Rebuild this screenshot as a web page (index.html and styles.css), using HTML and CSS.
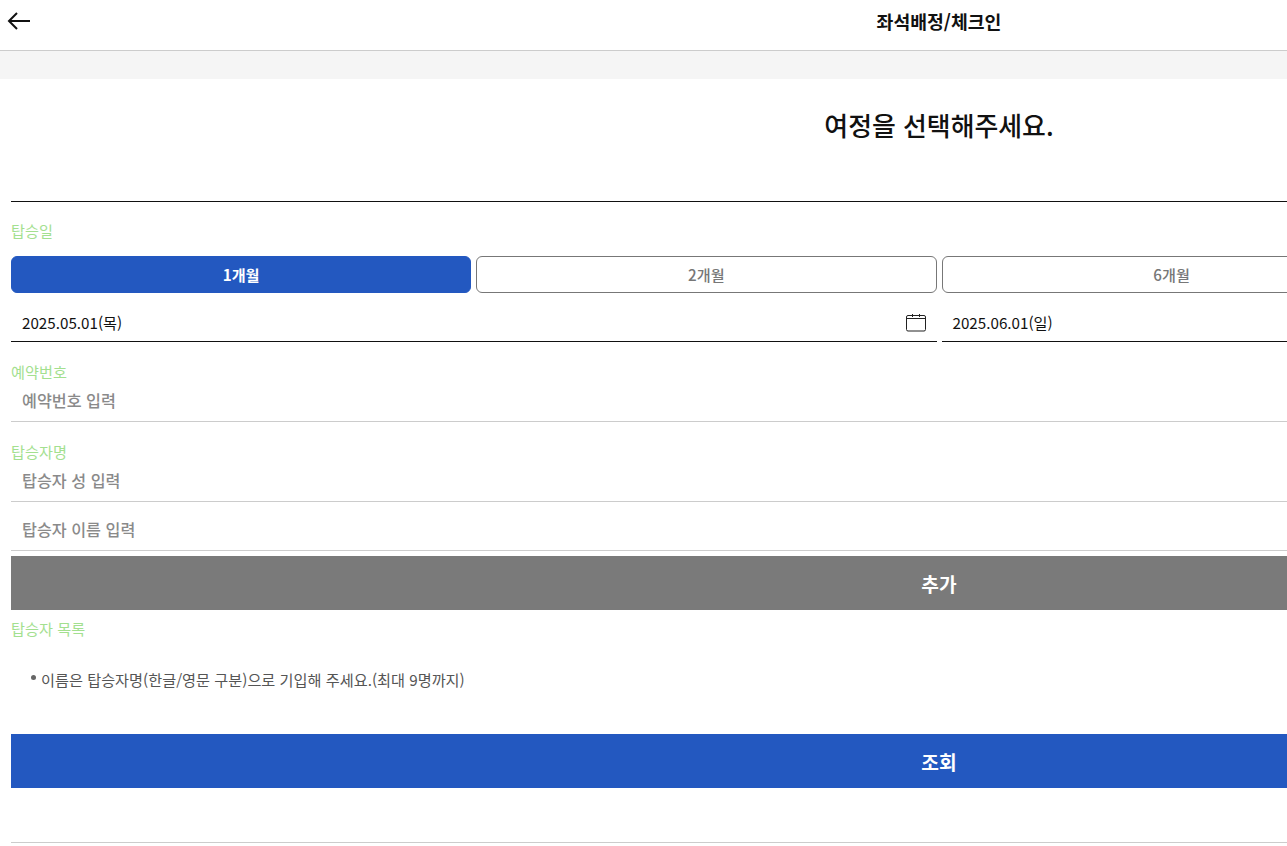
FILE: index.html
```html
<!DOCTYPE html>
<html lang="ko">
<head>
<meta charset="utf-8">
<title>좌석배정/체크인</title>
<link rel="stylesheet" href="styles.css">
</head>
<body>
<div class="page">
  <header class="topbar">
    <svg class="back" width="24" height="20" viewBox="0 0 24 20" fill="none" stroke="#111" stroke-width="2"><path d="M23 10H2M10 2l-8 8 8 8"/></svg>
    <h1 class="topbar-title">좌석배정/체크인</h1>
  </header>
  <div class="band"></div>
  <main class="content">
    <h2 class="heading">여정을 선택해주세요.</h2>
    <div class="section-date">
      <div class="label">탑승일</div>
      <div class="tabs">
        <button class="tab tab-on">1개월</button>
        <button class="tab">2개월</button>
        <button class="tab">6개월</button>
        <button class="tab" aria-hidden="true"></button>
      </div>
      <div class="dates">
        <div class="date"><span>2025.05.01(목)</span>
          <svg width="22" height="18" viewBox="0 0 22 18" fill="none" stroke="#222" stroke-width="1"><rect x="1.5" y="1.5" width="19" height="15.5" rx="1.5"/><path d="M1.5 4.5h19M7.5 0v3M14.5 0v3"/></svg>
        </div>
        <div class="date"><span>2025.06.01(일)</span>
          <svg width="22" height="18" viewBox="0 0 22 18" fill="none" stroke="#222" stroke-width="1"><rect x="1.5" y="1.5" width="19" height="15.5" rx="1.5"/><path d="M1.5 4.5h19M7.5 0v3M14.5 0v3"/></svg>
        </div>
      </div>
    </div>
    <div class="label label-res">예약번호</div>
    <div class="field">예약번호 입력</div>
    <div class="label label-name">탑승자명</div>
    <div class="field">탑승자 성 입력</div>
    <div class="field field-second">탑승자 이름 입력</div>
    <button class="wide wide-gray">추가</button>
    <div class="label label-list">탑승자 목록</div>
    <p class="note"><span class="dot"></span>이름은 탑승자명(한글/영문 구분)으로 기입해 주세요.(최대 9명까지)</p>
    <button class="wide wide-blue">조회</button>
    <div class="endline"></div>
  </main>
</div>
</body>
</html>
```
FILE: styles.css
```css
html, body { margin: 0; padding: 0; overflow: hidden; height: 846px; background: #fff; }
body { font-family: "Noto Sans CJK KR", "Noto Sans", sans-serif; color: #111; }
.page { width: 1878px; }
.topbar { position: relative; height: 50px; border-bottom: 1px solid #ccc; box-sizing: content-box; display: flex; justify-content: center; }
.back { position: absolute; left: 7px; top: 11px; }
.topbar-title { margin: 0; font-size: 18.3px; font-weight: 700; line-height: 42px; color: #111; }
.band { height: 28px; background: #f5f5f5; }
.content { padding: 0 11px; }
.heading { margin: 0; height: 123px; box-sizing: border-box; border-bottom: 1px solid #111; padding-top: 26px; font-size: 25.9px; font-weight: 500; line-height: 40px; text-align: center; color: #111; }
.label { font-size: 15.2px; line-height: 20px; padding-bottom: 2px; color: #a3e08f; }
.section-date .label { margin-top: 18px; }
.tabs { display: flex; gap: 5px; margin-top: 14px; }
.tab { flex: 1; height: 37px; box-sizing: border-box; border: 1px solid #777; border-radius: 6px; background: #fff; color: #777; font: 500 15.2px "Noto Sans CJK KR", sans-serif; padding: 0 0 2px; }
.tab-on { background: #2358c0; border-color: #2358c0; color: #fff; font-weight: 700; }
.dates { display: flex; gap: 5px; margin-top: 10px; }
.date { flex: 1; height: 39px; box-sizing: border-box; border-bottom: 1px solid #111; padding: 0 11px; display: flex; justify-content: space-between; align-items: center; font-size: 15.2px; color: #111; }
.date svg { margin: 1px -1px 0 0; }
.label-res { margin-top: 19px; }
.field { height: 40px; box-sizing: border-box; border-bottom: 1px solid #ccc; padding: 0 11px; margin-top: -1px; font-size: 16.2px; font-weight: 500; line-height: 36px; color: #8a8a8a; }
.label-name { margin-top: 19px; }
.field-second { height: 49px; margin-top: 0; line-height: 54px; }
.wide { display: block; width: 100%; height: 54px; border: 0; padding: 2px 0 0; color: #fff; font: 700 19.2px "Noto Sans CJK KR", sans-serif; }
.wide-gray { margin-top: 5px; background: #7a7a7a; }
.label-list { margin-top: 8px; }
.note { margin: 27px 0 0; padding-left: 20px; height: 24px; font-size: 15.2px; line-height: 24px; color: #555; display: flex; align-items: center; }
.dot { width: 5px; height: 5px; border-radius: 50%; background: #666; margin-right: 5px; margin-top: -4px; }
.wide-blue { margin-top: 43px; background: #2358c0; }
.endline { margin: 54px -11px 0 0; border-bottom: 1px solid #ccc; }
```
